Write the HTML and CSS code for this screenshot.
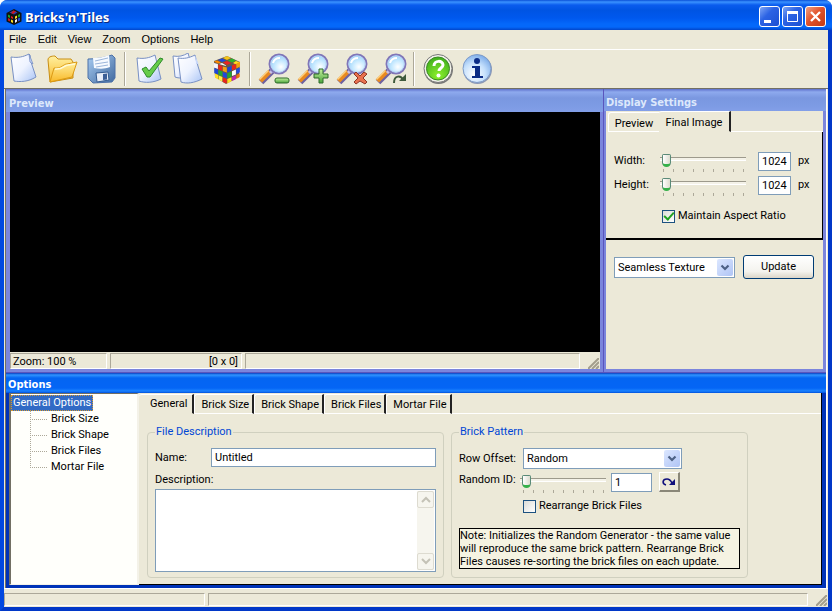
FILE: index.html
```html
<!DOCTYPE html>
<html lang="en">
<head>
<meta charset="utf-8">
<title>Bricks'n'Tiles</title>
<link rel="stylesheet" href="styles.css">
</head>
<body>
<svg class="defs" width="0" height="0" aria-hidden="true">
  <defs>
    <linearGradient id="paper" x1="0" y1="0" x2="1" y2="1"><stop offset="0" stop-color="#fff"/><stop offset=".5" stop-color="#eef3ff"/><stop offset="1" stop-color="#a9c4f5"/></linearGradient>
    <linearGradient id="folder" x1="0" y1="0" x2="0" y2="1"><stop offset="0" stop-color="#fff0a0"/><stop offset="1" stop-color="#f9b928"/></linearGradient>
    <linearGradient id="disk" x1="0" y1="0" x2="1" y2="1"><stop offset="0" stop-color="#a9cdf2"/><stop offset="1" stop-color="#40699f"/></linearGradient>
    <linearGradient id="green" x1="0" y1="0" x2="0" y2="1"><stop offset="0" stop-color="#c6efa0"/><stop offset="1" stop-color="#4aa63a"/></linearGradient>
    <radialGradient id="lens" cx=".6" cy=".65" r=".7"><stop offset="0" stop-color="#fff"/><stop offset=".45" stop-color="#c8eaff"/><stop offset="1" stop-color="#8fcbf8"/></radialGradient>
    <radialGradient id="help" cx=".5" cy=".8" r=".8"><stop offset="0" stop-color="#8cf02c"/><stop offset="1" stop-color="#3fae1c"/></radialGradient>
    <radialGradient id="info" cx=".4" cy=".7" r=".8"><stop offset="0" stop-color="#fff"/><stop offset=".5" stop-color="#c5e0fc"/><stop offset="1" stop-color="#6a9fe4"/></radialGradient>
    <g id="glass">
      <path d="M3 29 14 18" stroke="#6e62a0" stroke-width="6.500" stroke-linecap="butt"/>
      <path d="M2.500 28 12 18.500" stroke="#e88a20" stroke-width="4.500"/>
      <path d="M1.500 26.500 10.500 17.500" stroke="#ffd07a" stroke-width="1.500"/>
      <path d="m12 20 3-3" stroke="#c8c0e8" stroke-width="3"/>
      <circle cx="21" cy="11" r="9.500" fill="url(#lens)" stroke="#8076b8" stroke-width="2"/>
      <circle cx="21" cy="11" r="8.200" fill="none" stroke="#b9d4f6"/>
      <path d="M15 10c1-4 4-5 7-5" fill="none" stroke="#fff" stroke-width="2"/>
    </g>
    <g id="cube">
      <path d="M3 8 16 3l13 6-1 15-13 7L4 24z" fill="#6a5a48"/>
      <path d="m12 5 4-2 4 2-4 2z" fill="#f5c518"/><path d="m7 7 4-1.500 4 2L11 9z" fill="#2048e0"/><path d="m17 7.500 4-2 4 2-4 2z" fill="#2bb52b"/><path d="m12 9.500 4-1.500 4 2-4 2z" fill="#e22"/><path d="m3 8.500 3-1 4 2-3 1z" fill="#f80"/><path d="m22 10 3-2 4 1.500-4 2z" fill="#ffe020"/><path d="m8 11 3-1 4 2.500-0 .5z" fill="#fff"/>
      <path d="m3 10 3.900 1v5L3 14.500z" fill="#f4f4ff"/><path d="m7.300 11.500 4 1.500v5L7.300 16.300z" fill="#e8261c"/><path d="m11.800 13.500 4 1V19.500L11.800 18z" fill="#f8a010"/>
      <path d="m3.300 15 3.700 1.500V21.500l-3.700-1.500z" fill="#1d46d8"/><path d="m7.500 17 4 1.500V23.500L7.500 21.800z" fill="#20a838"/><path d="m11.800 19 4 1.500V25.500L11.800 23.800z" fill="#2048e0"/>
      <path d="m4 20.500 3.300 1.500v4.500l-3.300-2z" fill="#ffe020"/><path d="m7.700 22.500 3.700 1.500v4.500L7.700 26.800z" fill="#fff04a"/><path d="m11.800 24.500 4 1.500v4.500L11.800 29z" fill="#e8261c"/>
      <path d="m16.300 14.500 4.200-1.700v4.900l-4.200 1.900z" fill="#1d46d8"/><path d="m21 12.500 3.900-1.700v4.900L21 17.500z" fill="#e8261c"/><path d="m25.300 10.400 3.700-1.600v4.800l-3.700 1.900z" fill="#f5a010"/>
      <path d="m16.300 20.300 4.200-1.700V23.500l-4.200 1.900z" fill="#20a838"/><path d="m21 18.200 3.900-1.700V21.500L21 23z" fill="#fff"/><path d="m25.300 16 3.500-1.600v4.800l-3.500 1.900z" fill="#2048e0"/>
      <path d="m16.300 26 4.200-1.700v4L16.300 30.500z" fill="#ffe020"/><path d="m21 24 3.900-1.700V26.300L21 28z" fill="#c028b0"/><path d="m25.300 22 3.400-1.600v3.700L25.300 26z" fill="#f07010"/>
    </g>
    <path id="arrow" d="m1.500 1.500 3.500 3.500 3.500-3.500" fill="none" stroke="#4d6185" stroke-width="2.200"/>
    <path id="grip" d="M0 11 11 0M4 11l7-7M8 11l3-3" stroke="#a39e8c" stroke-width="2"/>
  </defs>
</svg>
<div class="window">
  <header class="titlebar">
    <svg width="16" height="16" viewBox="1 0 30 32" aria-hidden="true"><path d="M1 8 16 0l15 8v17l-15 7L1 25z" fill="#111"/><path d="m7 7 8-4 8 4-7 4z" fill="#2b3cb0"/><path d="m15 3 5 2-6 5-4-2z" fill="#d01818"/><path d="m4 11 4 2v5l-4-2z" fill="#18a828"/><path d="m10 14 4 2v4l-4-2z" fill="#e02020"/><path d="m4 18 4 2v5l-4-2z" fill="#d01818"/><path d="m10 21 4 2v5l-4-2z" fill="#ffe020"/><path d="m18 15 4-2v5l-4 2z" fill="#ffe020"/><path d="m24 12 4-2v5l-4 2z" fill="#18a828"/><path d="m18 22 4-2v5l-4 3z" fill="#f4f4ff"/><path d="m24 19 4-2v6l-4 2z" fill="#2048e0"/></svg>
    <h1>Bricks'n'Tiles</h1>
    <button class="caption" aria-label="Minimize"><svg viewBox="0 0 19 19"><path d="M4 13h7v3H4z" fill="#fff"/></svg></button>
    <button class="caption" aria-label="Maximize"><svg viewBox="0 0 19 19"><path d="M4.500 5v9.500h10V5M4 5h11" fill="none" stroke="#fff"/><path d="M4 4h11v3H4z" fill="#fff"/></svg></button>
    <button class="caption close" aria-label="Close"><svg viewBox="0 0 19 19"><path d="m5 5 9 9m0-9-9 9" stroke="#fff" stroke-width="2.300"/></svg></button>
  </header>
  <nav class="menu"><button>File</button><button>Edit</button><button>View</button><button>Zoom</button><button>Options</button><button>Help</button></nav>
  <div class="toolbar">
    <button aria-label="New"><svg viewBox="0 0 32 32"><path d="M3 4c7 1 12 0 18-3l1 1 1 7 5 15C20 29 12 29 6 28z" fill="url(#paper)" stroke="#7890c4"/><path d="m21 1 1 8 3 2z" fill="#c8d8fa" stroke="#7890c4" stroke-width=".8"/></svg></button>
    <button aria-label="Open"><svg viewBox="0 0 32 32"><path d="M1 7c0-3 3-4 7-4l3 3h13l2 3v16L3 29z" fill="url(#folder)" stroke="#c88e14"/><path d="m3 29 4-14c8 1 9-4 13-4l10-2-5 15z" fill="url(#folder)" stroke="#dc9a14"/><path d="M8 16c8 1 9-4 13-4l7-1" fill="none" stroke="#fffbd8" stroke-width="1.500"/></svg></button>
    <button aria-label="Save"><svg viewBox="0 0 32 32"><path d="M2 6c7 0 16-1 24-4l3 3v20l-3 4-19 1-5-5z" fill="url(#disk)" stroke="#4c71a8"/><path d="M7 5c7 0 11-1 16-3l1 12c-5 2-10 2-16 1z" fill="#f6faff"/><path d="m9 8 13-3M9 11l13-2M10 14l12-2" stroke="#9cb6da"/><path d="m10 20 12-1 1 8-12 2z" fill="#e8eef8" stroke="#345c92"/><path d="m17 21 4-.5v6l-4 .5z" fill="#3c5f96"/></svg></button>
    <span class="divider"></span>
    <button aria-label="Apply"><svg viewBox="0 0 32 32"><path d="M4 5c7 1 12 0 18-3l2 8 4 16C20 30 12 30 6 28z" fill="url(#paper)" stroke="#7890c4"/><path d="m9 16 4-2 3 4L27 5l3 1-13 18h-3z" fill="#66cc4a" stroke="#2f8b2c"/></svg></button>
    <button aria-label="Copy"><svg viewBox="0 0 32 32"><path d="M1 3c6 1 10 0 15-3l2 7 4 14c-7 4-14 5-19 3z" fill="url(#paper)" stroke="#7890c4"/><path d="M6 5c6 1 11 0 17-3l2 8 5 16c-8 4-15 5-21 3z" fill="url(#paper)" stroke="#7890c4"/><path d="m23 2 1 8 3 2z" fill="#c8d8fa"/></svg></button>
    <button aria-label="Bricks"><svg viewBox="0 0 32 32"><use href="#cube"/></svg></button>
    <span class="divider"></span>
    <button aria-label="Zoom out"><svg viewBox="0 0 32 32"><use href="#glass"/><rect x="17" y="25" width="14" height="5" rx="2" fill="url(#green)" stroke="#2f6b2c"/></svg></button>
    <button aria-label="Zoom in"><svg viewBox="0 0 32 32"><use href="#glass"/><path d="M22 16h4v5h5v4h-5v5h-4v-5h-5v-4h5z" fill="url(#green)" stroke="#2f6b2c"/></svg></button>
    <button aria-label="Reset zoom"><svg viewBox="0 0 32 32"><use href="#glass"/><path d="m20 19 4 4 4-4 3 2-4 4 4 4-2 2-5-3-4 3-2-2 4-4-4-4z" fill="#e8714e" stroke="#8e3526"/></svg></button>
    <button aria-label="Refresh zoom"><svg viewBox="0 0 32 32"><use href="#glass"/><path d="M19 30c0-8 7-8 9-3" fill="none" stroke="#3f5a3c" stroke-width="2"/><path d="M24 28h7v-7z" fill="#3f5a3c"/></svg></button>
    <span class="divider"></span>
    <button aria-label="Help"><svg viewBox="0 0 32 32"><circle cx="16.500" cy="16.500" r="14.500" fill="#777"/><circle cx="16" cy="15.500" r="14" fill="#f2f2ea" stroke="#777"/><circle cx="16" cy="15.500" r="11.500" fill="url(#help)" stroke="#3c8a26"/><path d="M12 13c0-6 9-6 9-1 0 3-4 3-4 6" fill="none" stroke="#fff" stroke-width="3"/><circle cx="16.500" cy="22.500" r="2" fill="#fff"/></svg></button>
    <button aria-label="About"><svg viewBox="0 0 32 32"><circle cx="16.500" cy="16.500" r="14.500" fill="#8c98b4"/><circle cx="16" cy="15.500" r="14" fill="url(#info)" stroke="#7f9cc8"/><circle cx="16" cy="8" r="3" fill="#0b2c86"/><path d="M11 13h8v10h3v2H11v-2h3v-8h-3z" fill="#0b2c86"/></svg></button>
  </div>
  <main class="workspace">
    <div class="upper">
      <section class="panel preview">
        <h2>Preview</h2>
        <div class="canvas"></div>
        <footer class="status"><span class="zoomcell">Zoom: 100 %</span><span class="sizecell">[0 x 0]</span><span class="rest"></span><svg class="grip" width="11" height="11" aria-hidden="true"><use href="#grip"/></svg></footer>
      </section>
      <section class="panel display">
        <h2>Display Settings</h2>
        <div class="panelbody">
          <div class="tabs" role="tablist"><button role="tab" class="light">Preview</button><button role="tab" class="active" aria-selected="true">Final Image</button><span class="fill"></span></div>
          <div class="tabpage sizes">
            <div class="sizerow"><label for="w">Width:</label><input type="range" aria-label="Width slider" value="0"><input type="text" id="w" value="1024"><span>px</span></div>
            <div class="sizerow"><label for="h">Height:</label><input type="range" aria-label="Height slider" value="0"><input type="text" id="h" value="1024"><span>px</span></div>
            <label class="check aspect"><input type="checkbox" checked>Maintain Aspect Ratio</label>
          </div>
          <div class="actions">
            <span class="combo"><select aria-label="Texture type"><option>Seamless Texture</option></select><span class="drop"><svg width="10" height="7"><use href="#arrow"/></svg></span></span>
            <button class="push">Update</button>
          </div>
        </div>
      </section>
    </div>
    <section class="panel options">
      <h2>Options</h2>
      <div class="optionsbody">
        <div class="tree">
          <a class="root" href="#general">General Options</a>
          <ul><li><a href="#size">Brick Size</a></li><li><a href="#shape">Brick Shape</a></li><li><a href="#files">Brick Files</a></li><li><a href="#mortar">Mortar File</a></li></ul>
        </div>
        <div class="editor">
          <div class="tabs" role="tablist"><button role="tab" class="active" aria-selected="true">General</button><button role="tab">Brick Size</button><button role="tab">Brick Shape</button><button role="tab">Brick Files</button><button role="tab">Mortar File</button><span class="fill"></span></div>
          <div class="groups">
            <fieldset>
              <legend>File Description</legend>
              <div class="namerow"><label for="name">Name:</label><input type="text" id="name" value="Untitled"></div>
              <label class="desclabel" for="desc">Description:</label>
              <div class="memo"><textarea id="desc"></textarea><span class="scroll"><span><svg width="10" height="7"><path d="m1 6 4-4 4 4" fill="none" stroke="#c4c2b6" stroke-width="2"/></svg></span><span><svg width="10" height="7"><path d="m1 1 4 4 4-4" fill="none" stroke="#c4c2b6" stroke-width="2"/></svg></span></span></div>
            </fieldset>
            <fieldset>
              <legend>Brick Pattern</legend>
              <div class="pattern">
                <label for="offset">Row Offset:</label>
                <span class="combo"><select id="offset"><option>Random</option></select><span class="drop"><svg width="10" height="7"><use href="#arrow"/></svg></span></span>
                <label class="idlabel" for="rid">Random ID:</label>
                <div class="idrow"><input type="range" aria-label="Random ID slider" value="0"><input type="text" id="rid" value="1"><button class="redo" aria-label="New random ID"><svg width="14" height="10"><path d="M4 8C0 7 0 2 5 2c3 0 4 2 5 4" fill="none" stroke="#10107c" stroke-width="1.600"/><path d="M7 8h6V2z" fill="#10107c"/></svg></button></div>
                <label class="check"><input type="checkbox">Rearrange Brick Files</label>
              </div>
              <p class="note">Note: Initializes the Random Generator - the same value<br>will reproduce the same brick pattern. Rearrange Brick<br>Files causes re-sorting the brick files on each update.</p>
            </fieldset>
          </div>
        </div>
      </div>
    </section>
  </main>
  <footer class="status main"><span class="first"></span><span class="rest"></span><svg class="grip" width="11" height="11" aria-hidden="true"><use href="#grip"/></svg></footer>
</div>
</body>
</html>
```
FILE: styles.css
```css
:root {
  --face: #ece9d8;
  --edge: #7f9db9;
  --shade: #aca899;
}
* { box-sizing: border-box; }
html, body { margin: 0; height: 100%; }
body, button, input, select, textarea {
  font: 11px/16px Roboto, "Liberation Sans", Arial, sans-serif;
  color: #000;
}
button, input, select, textarea { margin: 0; border-radius: 0; outline: 0; }
button { padding: 0; border: 0; background: none; }
h1, h2, p, ul { margin: 0; padding: 0; }
svg { display: block; }
.defs { position: absolute; }

.window {
  min-height: 100vh;
  display: flex;
  flex-direction: column;
  background: var(--face);
  border: solid #0148e0;
  border-width: 0 4px 4px;
  border-right-color: #0138c8;
  border-bottom-color: #0138c8;
  border-radius: 8px 8px 0 0;
}
.titlebar {
  height: 30px;
  margin: 0 -4px;
  padding: 3px 6px 0;
  display: flex;
  align-items: center;
  gap: 2px;
  border-radius: 7px 7px 0 0;
  background: linear-gradient(#0a50d8, #3a92ff 2px, #0a5cee 5px, #0054e3 10px, #0058ee 18px, #0468fa 24px, #0468fa 27px, #0145ca);
}
h1 {
  flex: 1;
  margin-left: 1px;
  font: bold 13px/18px "Noto Sans", "Open Sans", sans-serif;
  color: #fff;
  text-shadow: 1px 1px #0a2a80;
}
.caption {
  width: 21px;
  height: 21px;
  border: 1px solid #fff;
  border-radius: 3px;
  background: linear-gradient(135deg, #7fa6f5, #2c63e4 40%, #1c50d2);
}
.close { background: linear-gradient(135deg, #f0a083, #e2532c 45%, #c43a14); }

.menu {
  height: 20px;
  padding: 0 5px 2px;
  display: flex;
  align-items: center;
  gap: 11px;
  border-bottom: 1px solid #fff;
}
.menu button { font-family: "Liberation Sans", Arial, sans-serif; }
.toolbar {
  height: 39px;
  display: flex;
  align-items: center;
  border-bottom: 1px solid #716f64;
}
.toolbar button { width: 39px; display: grid; place-items: center; }
.toolbar svg { width: 32px; height: 32px; }
.divider { width: 8px; height: 34px; margin-left: -1px; background: linear-gradient(90deg, transparent 4px, #aca899 4px 5px, #fff 5px 6px, transparent 6px); }
.divider + button { margin-left: 1px; }

.workspace {
  flex: 1;
  display: flex;
  flex-direction: column;
  margin: 0 1px;
  border-left: 1px solid #716f64;
  border-right: 1px solid #fff;
}
.upper { flex: 1; display: flex; }
.panel { display: flex; flex-direction: column; }
.panel h2 { font: bold 11px/16px "DejaVu Sans Condensed", "DejaVu Sans", sans-serif; }
.preview, .display {
  padding: 0 3px 3px;
  background: #7b85dc;
  border-bottom: 1px solid #5a55bd;
}
.preview { flex: 1; padding-left: 4px; border-right: 1px solid #5a55bd; }
.preview h2, .display h2 {
  color: #dde8fb;
  background: linear-gradient(#5e70cc, #8eaaee 3px, #7a97e0 9px, #7d9be4 17px, #839fe8);
}
.preview h2 { margin: 0 -3px 0 -4px; padding: 7px 3px 0; }
.display h2 { margin: 0 -3px 0 -2px; padding: 6px 2px 0; }
.canvas { flex: 1; background: #000; }
.status {
  height: 17px;
  padding: 1px 1px 0 0;
  display: flex;
  gap: 3px;
  background: var(--face);
}
.status > span { border: 1px solid; border-color: var(--shade) #fff #fff var(--shade); }
.zoomcell { width: 97px; padding-left: 2px; }
.sizecell { width: 132px; padding-right: 3px; text-align: right; }
.zoomcell, .sizecell { line-height: 15px; }
.rest { flex: 1; }
.grip { align-self: flex-end; margin-left: 5px; }

.display { width: 222px; padding-left: 2px; }
.panelbody { flex: 1; background: var(--face); }
.tabs { display: flex; }
.tabs button {
  border: solid;
  border-width: 1px 2px 1px 1px;
  border-color: #fff #222 #fff #fff;
  border-radius: 3px 0 0 0;
  line-height: 18px;
}
.tabs .active { border-left: 0; border-bottom-color: transparent; }
.tabs .fill { flex: 1; border-bottom: 1px solid #fff; }
.display .tabs { padding-left: 2px; }
.display .tabs button { height: 20px; width: 51px; margin-top: 1px; padding-top: 2px; }
.display .tabs .light { border-right: 0; }
.display .tabs .active { width: 72px; margin-top: 0; height: 21px; }
.sizes {
  padding: 17px 12px 14px 8px;
  border: solid #000;
  border-width: 0 1px 2px 0;
}
.sizerow {
  height: 24px;
  display: grid;
  grid-template-columns: 46px 98px 40px auto;
  align-items: center;
}
input[type="text"] {
  min-width: 0;
  width: 33px;
  height: 19px;
  padding: 0 3px;
  border: 1px solid var(--edge);
  background: #fff;
}
input[type="range"] {
  appearance: none;
  width: 86px;
  height: 24px;
  padding: 0;
  background:
    repeating-linear-gradient(90deg, #aca899 0 1px, transparent 1px 10px) 3px 20px / 81px 3px no-repeat,
    linear-gradient(#9d9a8c 0 1px, #f4f2e8 1px 3px, #fff 3px) 0 8px / 100% 4px no-repeat;
}
input[type="range"]::-webkit-slider-runnable-track { height: 24px; }
input[type="range"]::-webkit-slider-thumb {
  appearance: none;
  width: 9px;
  height: 13px;
  margin: 5px 0 0 2px;
  background: linear-gradient(90deg, #fff, #dcdccf);
  border: 1px solid #5a8a78;
  border-bottom: 3px solid #35b04a;
  border-radius: 2px 2px 5px 5px;
}
.check { display: flex; align-items: center; gap: 3px; }
input[type="checkbox"] {
  appearance: none;
  width: 13px;
  height: 13px;
  border: 1px solid #1c5180;
  background: linear-gradient(135deg, #dcdcd7, #fff);
  display: grid;
  place-items: center;
}
input[type="checkbox"]:checked::after {
  content: "";
  width: 4px;
  height: 8px;
  margin-top: -3px;
  border: solid #21a121;
  border-width: 0 2px 2px 0;
  transform: rotate(42deg);
}
.aspect { margin: 11px 0 0 48px; }
.actions { padding: 15px 9px 0 8px; display: flex; align-items: center; gap: 8px; }
.combo {
  flex: 1;
  height: 21px;
  display: flex;
  padding: 1px;
  border: 1px solid var(--edge);
  background: #fff;
}
.combo select { appearance: none; flex: 1; min-width: 0; padding: 0 2px; border: 0; background: #fff; line-height: 17px; }
.drop { width: 16px; display: grid; place-items: center; border-radius: 2px; background: linear-gradient(135deg, #dce7ff, #afc4f5); }
.push {
  width: 71px;
  height: 24px;
  border: 1px solid #003c74;
  border-radius: 3px;
  background: linear-gradient(#fff, #f4f3ee 70%, #dcd6c8);
}

.options { padding: 0 4px 3px 3px; background: #0033b8; }
.options h2 {
  margin: 0 -4px 0 -3px;
  padding: 4px 2px 0;
  color: #fff;
  background: linear-gradient(#0a3fc0, #2f94ff 2px, #0465f2 5px, #0465f5 15px, #1a82ff 18px, #0050dc);
}
.optionsbody { display: flex; background: var(--face); }
.tree {
  width: 130px;
  padding: 1px 0 0;
  background: #fffffb;
  border: solid;
  border-width: 1px 2px 1px 2px;
  border-color: #716f64 #f4f2e8 #f4f2e8 #716f64;
}
.tree a { display: block; width: max-content; color: #000; text-decoration: none; }
.tree .root { padding: 0 2px; color: #fff; background: #316ac5; outline: 1px dotted #d89a30; outline-offset: -1px; }
.tree ul { margin-left: 19px; list-style: none; }
.tree li { display: flex; align-items: center; height: 16px; }
.tree li::before {
  content: "";
  width: 18px;
  height: 16px;
  margin-right: 3px;
  background:
    repeating-linear-gradient(90deg, var(--shade) 0 1px, transparent 1px 2px) 0 8px / 18px 1px no-repeat,
    repeating-linear-gradient(var(--shade) 0 1px, transparent 1px 2px) 0 0 / 1px 16px no-repeat;
}
.tree li:last-child::before { background-size: 18px 1px, 1px 9px; }

.editor { flex: 1; border: solid #000; border-width: 0 1px 1px 0; }
.editor .tabs { padding-top: 1px; }
.editor .tabs button { height: 20px; padding: 1px 3px 0 6px; }
.editor .tabs .active { padding: 0 5px 0 11px; }
.groups { display: flex; gap: 7px; padding: 11px 8px 6px; }
fieldset {
  min-width: 0;
  width: 297px;
  margin: 0;
  padding: 8px 7px 5px;
  border: 1px solid #d0d0bf;
  border-radius: 4px;
}
legend { padding: 0 1px; line-height: 14px; color: #0046d5; }
.namerow { display: flex; align-items: center; margin-top: 1px; }
.namerow label { width: 56px; }
.namerow input { flex: 1; }
.desclabel { display: block; margin: 5px 0 1px; }
.memo { height: 83px; display: flex; padding: 1px; border: 1px solid var(--edge); background: #fff; }
.memo textarea { flex: 1; border: 0; padding: 2px; resize: none; background: #fff; }
.scroll { width: 17px; display: flex; flex-direction: column; justify-content: space-between; background: #f6f5ee; }
.scroll > span { height: 17px; display: grid; place-items: center; border: 1px solid #dddbd0; border-radius: 2px; }
.pattern { display: grid; grid-template-columns: 64px 159px; row-gap: 1px; margin-top: 1px; align-items: center; }
.pattern > .check { grid-column: 2; margin-top: 3px; }
.idlabel { align-self: start; padding-top: 2px; }
.idrow { display: flex; align-items: center; }
.idrow input[type="range"] { margin-left: -3px; }
.idrow input[type="text"] { width: 41px; margin-left: 5px; }
.redo { width: 21px; height: 20px; margin-left: 7px; display: grid; place-items: center; border: solid; border-width: 1px 2px 2px 1px; border-color: #fff #8a8778 #8a8778 #fff; }
.note { margin-top: 14px; width: 281px; line-height: 13px; white-space: nowrap; border: 1px solid #000; background: #f5f3e2; }

.main { height: 19px; padding: 4px 1px 1px 0; border-top: 1px solid #fff; }
.main .first { width: 201px; }
```
